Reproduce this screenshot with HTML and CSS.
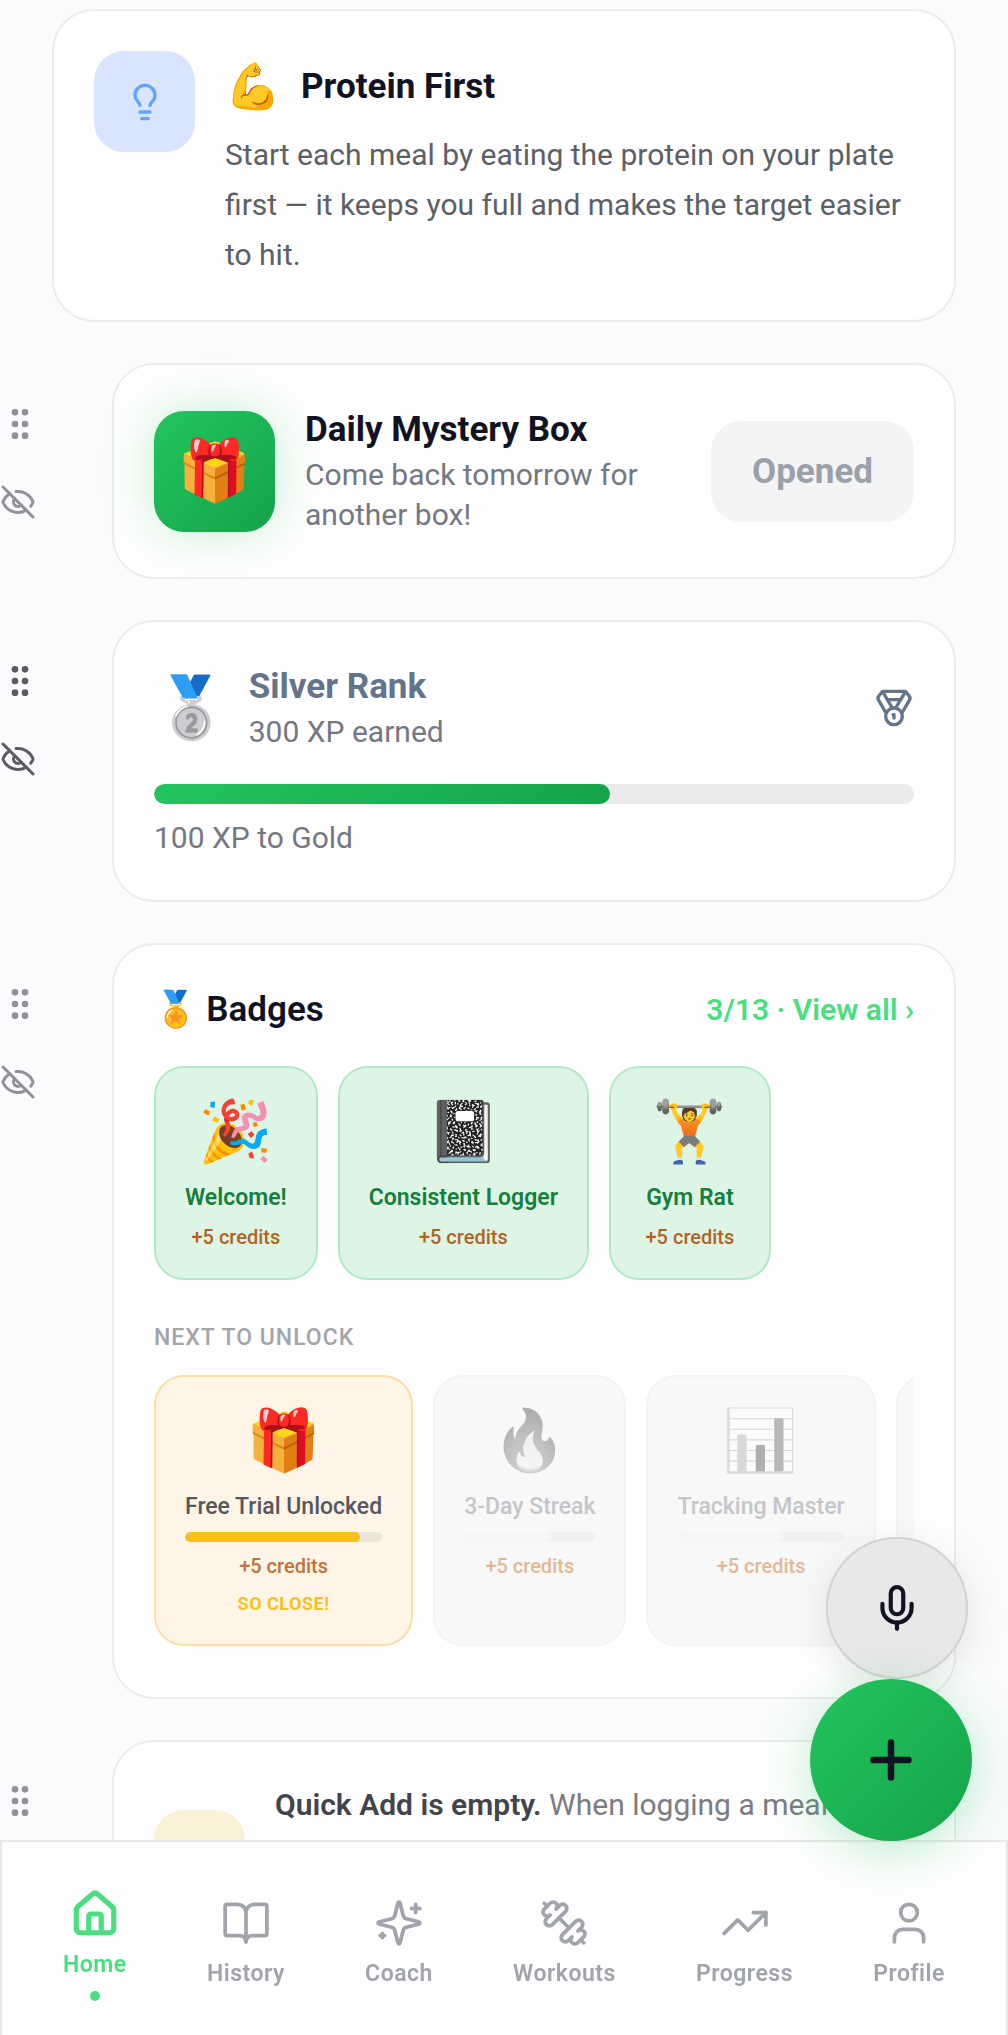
FILE: index.html
```html
<!DOCTYPE html>
<html lang="en">
<head>
    <meta charset="UTF-8">
    <meta name="viewport" content="width=device-width, initial-scale=1.0">
    <title>Home</title>
    <link rel="stylesheet" href="styles.css">
</head>
<body>
    <!-- shared icons -->
    <svg class="icon-defs" aria-hidden="true">
        <symbol id="icon-grip" viewBox="0 0 24 24">
            <circle cx="9" cy="5" r="1"/><circle cx="9" cy="12" r="1"/><circle cx="9" cy="19" r="1"/>
            <circle cx="15" cy="5" r="1"/><circle cx="15" cy="12" r="1"/><circle cx="15" cy="19" r="1"/>
        </symbol>
        <symbol id="icon-eye-off" viewBox="0 0 24 24">
            <path d="M10.733 5.076a10.744 10.744 0 0 1 11.205 6.575 1 1 0 0 1 0 .696 10.747 10.747 0 0 1-1.444 2.49"/>
            <path d="M14.084 14.158a3 3 0 0 1-4.242-4.242"/>
            <path d="M17.479 17.499a10.75 10.75 0 0 1-15.417-5.151 1 1 0 0 1 0-.696 10.75 10.75 0 0 1 4.446-5.143"/>
            <path d="m2 2 20 20"/>
        </symbol>
    </svg>

    <main class="feed">
        <section class="card tip">
            <div class="tip-icon">
                <svg class="icon" viewBox="0 0 24 24"><path d="M15 14c.2-1 .7-1.7 1.5-2.5 1-.9 1.5-2.2 1.5-3.5A6 6 0 0 0 6 8c0 1 .2 2.2 1.5 3.5.7.7 1.3 1.5 1.5 2.5"/><path d="M9 18h6"/><path d="M10 22h4"/></svg>
            </div>
            <div class="tip-body">
                <div class="tip-head">
                    <span class="tip-emoji">💪</span>
                    <h2 class="title">Protein First</h2>
                </div>
                <p class="tip-text">Start each meal by eating the protein on your plate first — it keeps you full and makes the target easier to hit.</p>
            </div>
        </section>

        <div class="widget">
            <div class="handles">
                <button class="handle" aria-label="Move"><svg class="icon"><use href="#icon-grip"/></svg></button>
                <button class="handle" aria-label="Hide"><svg class="icon icon-eye"><use href="#icon-eye-off"/></svg></button>
            </div>
            <section class="card row">
                <div class="box-tile"><span class="emoji">🎁</span></div>
                <div class="grow">
                    <h2 class="title">Daily Mystery Box</h2>
                    <p class="subtitle">Come back tomorrow for another box!</p>
                </div>
                <button class="opened" disabled>Opened</button>
            </section>
        </div>

        <div class="widget">
            <div class="handles active">
                <button class="handle" aria-label="Move"><svg class="icon"><use href="#icon-grip"/></svg></button>
                <button class="handle" aria-label="Hide"><svg class="icon icon-eye"><use href="#icon-eye-off"/></svg></button>
            </div>
            <section class="card">
                <div class="rank-head">
                    <span class="emoji">🥈</span>
                    <div class="grow">
                        <h2 class="title rank-title">Silver Rank</h2>
                        <p class="subtitle">300 XP earned</p>
                    </div>
                    <svg class="icon rank-icon" viewBox="0 0 24 24"><path d="M7.21 15 2.66 7.14a2 2 0 0 1 .13-2.2L4.4 2.8A2 2 0 0 1 6 2h12a2 2 0 0 1 1.6.8l1.6 2.14a2 2 0 0 1 .14 2.2L16.79 15"/><path d="M11 12 5.12 2.2"/><path d="m13 12 5.88-9.8"/><path d="M8 7h8"/><circle cx="12" cy="17" r="5"/><path d="M12 18v-2h-.5"/></svg>
                </div>
                <div class="xp-bar"><div class="xp-fill" style="width: 60%"></div></div>
                <p class="xp-left">100 XP to Gold</p>
            </section>
        </div>

        <div class="widget">
            <div class="handles">
                <button class="handle" aria-label="Move"><svg class="icon"><use href="#icon-grip"/></svg></button>
                <button class="handle" aria-label="Hide"><svg class="icon icon-eye"><use href="#icon-eye-off"/></svg></button>
            </div>
            <section class="card">
                <div class="badges-head">
                    <h2 class="title badges-title">🏅 Badges</h2>
                    <a class="view-all" href="#">3/13 · View all ›</a>
                </div>
                <div class="badge-row">
                    <div class="badge earned">
                        <span class="emoji">🎉</span>
                        <span class="badge-name">Welcome!</span>
                        <span class="credits">+5 credits</span>
                    </div>
                    <div class="badge earned">
                        <span class="emoji">📓</span>
                        <span class="badge-name">Consistent Logger</span>
                        <span class="credits">+5 credits</span>
                    </div>
                    <div class="badge earned">
                        <span class="emoji">🏋️</span>
                        <span class="badge-name">Gym Rat</span>
                        <span class="credits">+5 credits</span>
                    </div>
                </div>
                <h3 class="next-label">NEXT TO UNLOCK</h3>
                <div class="badge-row next-row">
                    <div class="badge close">
                        <span class="emoji">🎁</span>
                        <span class="badge-name">Free Trial Unlocked</span>
                        <div class="badge-bar"><div class="badge-fill" style="width: 89%"></div></div>
                        <span class="credits">+5 credits</span>
                        <span class="so-close">SO CLOSE!</span>
                    </div>
                    <div class="badge locked">
                        <span class="emoji">🔥</span>
                        <span class="badge-name">3-Day Streak</span>
                        <div class="badge-bar"><div class="badge-fill" style="width: 66%"></div></div>
                        <span class="credits">+5 credits</span>
                    </div>
                    <div class="badge locked">
                        <span class="emoji">📊</span>
                        <span class="badge-name">Tracking Master</span>
                        <div class="badge-bar"><div class="badge-fill" style="width: 63%"></div></div>
                        <span class="credits">+5 credits</span>
                    </div>
                    <div class="badge locked"></div>
                </div>
            </section>
        </div>

        <div class="widget">
            <div class="handles">
                <button class="handle" aria-label="Move"><svg class="icon"><use href="#icon-grip"/></svg></button>
            </div>
            <section class="card row quick-add">
                <div class="quick-tile"></div>
                <p class="quick-text"><strong>Quick Add is empty.</strong> When logging a meal</p>
            </section>
        </div>
    </main>

    <div class="fabs">
        <button class="fab-mic" aria-label="Voice log">
            <svg class="icon" viewBox="0 0 24 24"><path d="M12 2a3 3 0 0 0-3 3v7a3 3 0 0 0 6 0V5a3 3 0 0 0-3-3Z"/><path d="M19 10v2a7 7 0 0 1-14 0v-2"/><path d="M12 19v3"/></svg>
        </button>
        <button class="fab-add" aria-label="Add">
            <svg class="icon" viewBox="0 0 24 24"><path d="M5 12h14"/><path d="M12 5v14"/></svg>
        </button>
    </div>

    <nav class="tabs">
        <a class="tab current" href="#">
            <svg class="icon" viewBox="0 0 24 24"><path d="M15 21v-8a1 1 0 0 0-1-1h-4a1 1 0 0 0-1 1v8"/><path d="M3 10a2 2 0 0 1 .709-1.528l7-5.999a2 2 0 0 1 2.582 0l7 5.999A2 2 0 0 1 21 10v9a2 2 0 0 1-2 2H5a2 2 0 0 1-2-2z"/></svg>
            <span>Home</span>
        </a>
        <a class="tab" href="#">
            <svg class="icon" viewBox="0 0 24 24"><path d="M12 7v14"/><path d="M3 18a1 1 0 0 1-1-1V4a1 1 0 0 1 1-1h5a4 4 0 0 1 4 4 4 4 0 0 1 4-4h5a1 1 0 0 1 1 1v13a1 1 0 0 1-1 1h-6a3 3 0 0 0-3 3 3 3 0 0 0-3-3z"/></svg>
            <span>History</span>
        </a>
        <a class="tab" href="#">
            <svg class="icon" viewBox="0 0 24 24"><path d="M9.937 15.5A2 2 0 0 0 8.5 14.063l-6.135-1.582a.5.5 0 0 1 0-.962L8.5 9.936A2 2 0 0 0 9.937 8.5l1.582-6.135a.5.5 0 0 1 .963 0L14.063 8.5A2 2 0 0 0 15.5 9.937l6.135 1.581a.5.5 0 0 1 0 .964L15.5 14.063a2 2 0 0 0-1.437 1.437l-1.582 6.135a.5.5 0 0 1-.963 0z"/><path d="M20 3v4"/><path d="M22 5h-4"/><path d="M4 17v2"/><path d="M5 18H3"/></svg>
            <span>Coach</span>
        </a>
        <a class="tab" href="#">
            <svg class="icon" viewBox="0 0 24 24"><path d="M14.4 14.4 9.6 9.6"/><path d="M18.657 21.485a2 2 0 1 1-2.829-2.828l-1.767 1.768a2 2 0 1 1-2.829-2.829l6.364-6.364a2 2 0 1 1 2.829 2.829l-1.768 1.767a2 2 0 1 1 2.828 2.829z"/><path d="m21.5 21.5-1.4-1.4"/><path d="M3.9 3.9 2.5 2.5"/><path d="M6.404 12.768a2 2 0 1 1-2.829-2.829l1.768-1.767a2 2 0 1 1-2.828-2.829l2.828-2.828a2 2 0 1 1 2.829 2.828l1.767-1.768a2 2 0 1 1 2.829 2.829z"/></svg>
            <span>Workouts</span>
        </a>
        <a class="tab" href="#">
            <svg class="icon" viewBox="0 0 24 24"><path d="m22 7-8.500 8.500-5-5L2 17"/><path d="M16 7h6v6"/></svg>
            <span>Progress</span>
        </a>
        <a class="tab" href="#">
            <svg class="icon" viewBox="0 0 24 24"><path d="M19 21v-2a4 4 0 0 0-4-4H9a4 4 0 0 0-4 4v2"/><circle cx="12" cy="7" r="4"/></svg>
            <span>Profile</span>
        </a>
    </nav>
</body>
</html>
```
FILE: styles.css
```css
* {
    box-sizing: border-box;
}
body {
    margin: 0;
    height: 100vh;
    overflow: hidden;
    background-color: #fafbfd;
    color: #111322;
    font-family: Roboto, "Noto Color Emoji", sans-serif;
    font-size: 30px;
    line-height: 40px;
}
h2, h3, p {
    margin: 0;
}
button {
    font-family: inherit;
    border: none;
    cursor: pointer;
}
a {
    text-decoration: none;
}
.icon-defs {
    position: absolute;
    width: 0;
    height: 0;
}
.icon {
    display: block;
    flex-shrink: 0;
    width: 40px;
    height: 40px;
    fill: none;
    stroke: currentColor;
    stroke-width: 2;
    stroke-linecap: round;
    stroke-linejoin: round;
}
.emoji {
    font-size: 60px;
    line-height: 72px;
}
.grow {
    flex: 1;
    padding-bottom: 2px;
}

/* Feed */
.feed {
    display: flex;
    flex-direction: column;
    gap: 41px;
    padding: 9px 52px 0 0;
}
.card {
    min-width: 0;
    padding: 40px;
    background-color: #fefefe;
    border: 2px solid #ececed;
    border-radius: 42px;
}
.row {
    display: flex;
    align-items: center;
    gap: 30px;
}
.title {
    font-size: 35px;
    line-height: 50px;
    font-weight: 700;
}
.subtitle {
    color: #757881;
}

/* Tip of the day */
.tip {
    display: flex;
    align-items: flex-start;
    gap: 30px;
    margin-left: 52px;
}
.tip-icon {
    display: flex;
    align-items: center;
    justify-content: center;
    flex-shrink: 0;
    width: 101px;
    height: 101px;
    border-radius: 30px;
    background-color: #d9e5fe;
    color: #60a5fa;
}
.tip-head {
    display: flex;
    align-items: center;
    gap: 20px;
    height: 69px;
    padding-top: 3px;
    margin-bottom: 10px;
}
.tip-emoji {
    font-size: 45px;
}
.tip-text {
    line-height: 50px;
    color: #5c5f66;
}

/* Widgets with the edit handles on the left */
.widget {
    display: grid;
    grid-template-columns: 112px minmax(0, 1fr);
}
.handles {
    display: flex;
    flex-direction: column;
    align-items: flex-start;
    gap: 40px;
    padding-top: 41px;
    color: #919295;
}
.handles.active {
    color: #5b5c60;
}
.handle {
    padding: 0;
    background: none;
    color: inherit;
}
.icon-eye {
    width: 36px;
    height: 36px;
}

/* Mystery box */
.box-tile {
    display: flex;
    align-items: center;
    justify-content: center;
    flex-shrink: 0;
    width: 121px;
    height: 121px;
    border-radius: 30px;
    background: linear-gradient(135deg, #22c55e, #16a34a);
    box-shadow: 0 0 50px rgba(34, 197, 94, 0.25);
}
.opened {
    height: 101px;
    padding: 0 41px;
    border-radius: 30px;
    background-color: #f3f4f6;
    color: #9ca0a8;
    font-size: 35px;
    font-weight: 700;
}

/* Rank */
.rank-head {
    display: flex;
    align-items: center;
    gap: 20px;
    margin-bottom: 30px;
}
.rank-title {
    color: #64748b;
}
.rank-icon {
    color: #64748b;
}
.xp-bar {
    height: 20px;
    border-radius: 10px;
    background-color: #ebebeb;
    overflow: hidden;
}
.xp-fill {
    height: 100%;
    border-radius: 10px;
    background: linear-gradient(135deg, #22c55e, #16a34a);
}
.xp-left {
    margin-top: 11px;
    line-height: 45px;
    color: #757881;
}

/* Badges */
.badges-head {
    display: flex;
    align-items: center;
    justify-content: space-between;
    margin-bottom: 31px;
}
.badges-title {
    font-weight: 600;
}
.view-all {
    color: #4ade80;
    font-weight: 600;
}
.badge-row {
    display: flex;
    gap: 20px;
    overflow: hidden;
}
.badge {
    display: flex;
    flex-direction: column;
    align-items: center;
    flex-shrink: 0;
    min-width: 162px;
    padding: 28px 29px 26px;
    border: 2px solid;
    border-radius: 30px;
}
.badge-name {
    margin-top: 13px;
    font-size: 23px;
    line-height: 34px;
    font-weight: 500;
}
.credits {
    margin-top: 7px;
    font-size: 20px;
    line-height: 30px;
    font-weight: 500;
    color: #b4631f;
}
.earned {
    background-color: #def5e5;
    border-color: #b0e9c8;
}
.earned .badge-name {
    color: #15803d;
    font-weight: 600;
}
.close {
    background-color: #fef5e6;
    border-color: #fadfa6;
}
.close .badge-name {
    color: #57575e;
}
.close .credits {
    color: #c0733c;
}
.locked {
    background-color: #f8f8f8;
    border-color: #f3f3f3;
}
.locked .emoji {
    filter: grayscale(1);
    opacity: 0.5;
}
.locked .badge-name {
    color: #c5c6c9;
}
.locked .credits {
    color: #e3b896;
}
.badge-bar {
    width: 100%;
    height: 10px;
    margin: 8px 0 2px;
    border-radius: 5px;
    background-color: #ebe5da;
    overflow: hidden;
}
.badge-fill {
    height: 100%;
    border-radius: 5px;
    background-color: #f8c024;
}
.locked .badge-bar {
    background-color: #f1f1f1;
}
.locked .badge-fill {
    background-color: #f6f6f6;
}
.so-close {
    margin-top: 9px;
    font-size: 18px;
    line-height: 28px;
    font-weight: 700;
    letter-spacing: 0.5px;
    color: #f8c024;
}
.next-label {
    margin: 41px 0 20px;
    font-size: 23px;
    line-height: 34px;
    font-weight: 500;
    letter-spacing: 1px;
    color: #a3a5a9;
}
.next-row {
    padding-bottom: 11px;
}

/* Quick add */
.quick-tile {
    flex-shrink: 0;
    width: 91px;
    height: 91px;
    border-radius: 30px;
    background-color: #fbf1d6;
}
.quick-add {
    height: 230px;
}
.quick-text {
    align-self: flex-start;
    line-height: 45px;
    color: #7b7c80;
}
.quick-text strong {
    color: #42434b;
    font-weight: 600;
}

/* Floating buttons */
.fabs {
    position: fixed;
    right: 36px;
    bottom: 194px;
    z-index: 3;
    display: flex;
    flex-direction: column;
    align-items: flex-end;
}
.fabs button {
    display: flex;
    align-items: center;
    justify-content: center;
    padding: 0;
    border-radius: 50%;
    color: #111322;
}
.fabs .fab-mic {
    width: 142px;
    height: 142px;
    margin-right: 4px;
    background-color: #e8e8e8;
    border: 2px solid #d2d2d2;
    box-shadow: 0 10px 40px rgba(0, 0, 0, 0.1);
}
.fab-mic .icon {
    width: 50px;
    height: 50px;
}
.fabs .fab-add {
    width: 162px;
    height: 162px;
    background: linear-gradient(135deg, #22c55e, #16a34a);
    box-shadow: 0 10px 50px rgba(34, 197, 94, 0.3);
}
.fab-add .icon {
    width: 60px;
    height: 60px;
    stroke-width: 2.6;
}

/* Bottom navigation */
.tabs {
    position: fixed;
    left: 0;
    right: 0;
    bottom: 0;
    z-index: 2;
    display: flex;
    align-items: center;
    justify-content: space-between;
    height: 195px;
    padding: 12px 61px 0;
    border: 2px solid #e9e9ea;
    border-bottom: none;
    background-color: rgba(254, 254, 254, 0.96);
    backdrop-filter: blur(20px);
}
.tab {
    display: flex;
    flex-direction: column;
    align-items: center;
    gap: 9px;
    color: #a1a4ab;
    font-size: 23px;
    line-height: 34px;
    font-weight: 600;
    letter-spacing: 0.5px;
}
.tab .icon {
    width: 50px;
    height: 50px;
    stroke-width: 1.8;
}
.current {
    color: #4ade80;
}
.current .icon {
    stroke-width: 2.5;
}
.current::after {
    content: "";
    width: 10px;
    height: 10px;
    border-radius: 50%;
    background-color: currentColor;
}
```
